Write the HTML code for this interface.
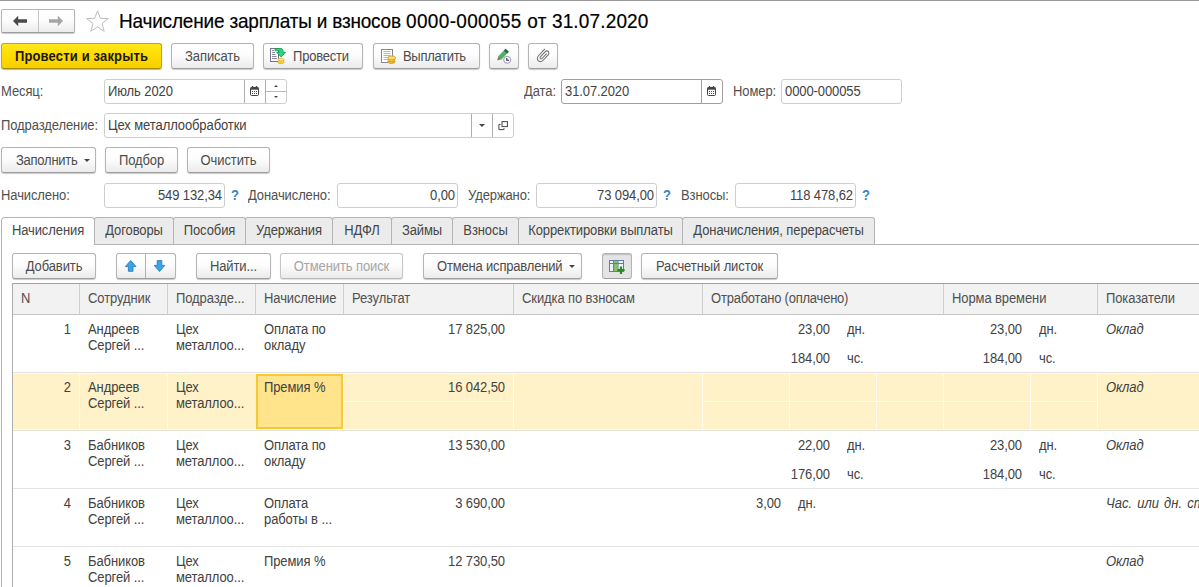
<!DOCTYPE html>
<html lang="ru"><head><meta charset="utf-8"><title>Начисление зарплаты и взносов</title>
<style>
*{box-sizing:border-box;margin:0;padding:0}
html,body{width:1199px;height:587px;overflow:hidden;background:#fff}
body{font-family:"Liberation Sans",sans-serif;font-size:13px;color:#464646;position:relative;line-height:15px}
.a{position:absolute;white-space:nowrap}
.btn{position:absolute;height:26px;border:1px solid #b4b4b4;border-bottom-color:#9e9e9e;border-radius:3px;background:linear-gradient(#ffffff 0%,#fdfdfd 45%,#ebebeb 100%);box-shadow:0 1px 1px rgba(0,0,0,.22);color:#4c4c4c;text-align:center;line-height:25px;white-space:nowrap}
.btn.y{background:linear-gradient(#ffe61e 0%,#ffdc00 50%,#f7ce00 100%);border-color:#c9a700;border-bottom-color:#a88c00;color:#1c1808;font-weight:bold;box-shadow:0 1px 1px rgba(90,70,0,.4)}
.btn.dis{color:#a6a6a6;border-color:#c6c6c6;border-bottom-color:#b8b8b8;box-shadow:0 1px 1px rgba(0,0,0,.12)}
.btn.on{background:#e4e4e4;box-shadow:inset 0 1px 1px rgba(0,0,0,.18)}
.inp{position:absolute;height:25px;border:1px solid #cecece;border-radius:3px;background:#fff;line-height:23px;color:#424242;white-space:nowrap}
.inp.f{border-color:#a0a0a0}
.lbl{position:absolute;color:#505050;line-height:25px;white-space:nowrap}
.q{position:absolute;color:#3b86c0;line-height:25px;font-weight:bold;font-size:13px}
.vd{position:absolute;top:0;bottom:0;width:1px;background:#adadad}
.tab{position:absolute;top:217px;height:27px;border:1px solid #b4b4b4;border-bottom:none;background:#ebebeb;color:#464646;line-height:26px;text-align:center;white-space:nowrap;border-radius:3px 3px 0 0}
.tab.act{background:#fff;height:28px;z-index:2;border-radius:4px 4px 0 0}
.th{position:absolute;top:284px;height:30px;line-height:30px;color:#505050;padding-left:8px;border-left:1px solid #cfcfcf;white-space:nowrap;overflow:hidden}
.row{position:absolute;left:13px;right:0;height:58px;border-bottom:1px solid #e3e3e3}
.c{position:absolute;line-height:16px;white-space:nowrap;color:#424242}
.ttl{font-size:19px;font-weight:normal;line-height:24px;color:#000;-webkit-text-stroke:0.18px #000;transform:scaleY(1.06);transform-origin:0 5px}
.t{display:inline-block;line-height:15px;letter-spacing:-0.1px;transform:scaleY(1.06);transform-origin:0 12px}
.r{text-align:right}
.i{font-style:italic}
</style></head>
<body>
<div class="a" style="left:0;top:0;width:1199px;height:1px;background:#999"></div>
<div class="btn" style="left:1px;top:9px;width:74px;height:24px;border-radius:2px">
<div class="vd" style="left:36px;background:#c6c6c6"></div>
<svg class="a" style="left:10px;top:5px" width="16" height="12" viewBox="0 0 16 12"><path d="M1 6 L6.2 0.8 L6.2 4.2 L15 4.2 L15 7.8 L6.2 7.8 L6.2 11.2 Z" fill="#4a4a4a"/></svg>
<svg class="a" style="left:46px;top:5px" width="16" height="12" viewBox="0 0 16 12"><path d="M15 6 L9.8 0.8 L9.8 4.2 L1 4.2 L1 7.8 L9.8 7.8 L9.8 11.2 Z" fill="#a5a5a5"/></svg>
</div>
<svg class="a" style="left:85px;top:9px" width="25" height="24" viewBox="0 0 25 24"><path d="M12.5 1.8 L15.3 9.3 L23.3 9.6 L17 14.6 L19.2 22.3 L12.5 17.9 L5.8 22.3 L8 14.6 L1.7 9.6 L9.7 9.3 Z" fill="#fff" stroke="#bdbdbd" stroke-width="1" stroke-linejoin="miter"/></svg>
<h1 class="a ttl" style="left:119px;top:9px"><span style="letter-spacing:-0.19px">Начисление зарплаты и взносов </span><span style="letter-spacing:0.34px">0000-000055 </span><span style="letter-spacing:0.15px">от 31.07.2020</span></h1>
<div class="btn y" style="left:1px;top:43px;width:161px;letter-spacing:0.17px"><span class="t" style="letter-spacing:0.16px">Провести и закрыть</span></div>
<div class="btn" style="left:171px;top:43px;width:83px"><span class="t">Записать</span></div>
<div class="btn" style="left:263px;top:43px;width:100px;text-align:left;padding-left:29px"><svg class="a" style="left:6px;top:4px" width="17" height="17" viewBox="0 0 17 17">
<rect x="0.5" y="0.5" width="8" height="13" fill="#fff" stroke="#74748a"/>
<path d="M2 2.5h2M2 4.5h3M2 6.5h3.5M2 8.5h4.5M2 10.5h5" stroke="#8a8a9c" stroke-width="1"/>
<rect x="7.9" y="11.6" width="6.2" height="3" fill="#f3d83a"/>
<ellipse cx="11" cy="14.4" rx="3.1" ry="1.3" fill="#f6e24a" stroke="#e0a63c" stroke-width=".7"/>
<ellipse cx="11" cy="13" rx="3.1" ry="1.3" fill="#f9e654" stroke="#e0a63c" stroke-width=".7"/>
<ellipse cx="11" cy="11.6" rx="3.1" ry="1.3" fill="#fbee7a" stroke="#e0a63c" stroke-width=".7"/>
<path d="M5 0.5 H11 Q13 0.5 13 2.5 V4.3 H15.5 L11.1 9.1 L6.7 4.3 H9.3 V3.5 Q9.3 2.8 8.6 2.8 H5 Z" fill="#2bd482" stroke="#10984f" stroke-width=".8" stroke-linejoin="round"/>
</svg><span class="t" style="letter-spacing:-0.2px">Провести</span></div>
<div class="btn" style="left:373px;top:43px;width:107px;text-align:left;padding-left:29px"><svg class="a" style="left:7px;top:5px" width="17" height="16" viewBox="0 0 17 16">
<rect x="0.5" y="0.5" width="11" height="13" fill="#fff" stroke="#85859a"/>
<path d="M2.5 2.5h7M2.5 4.5h7M2.5 6.5h7M2.5 8.5h4M2.5 10.5h4" stroke="#a9b6d8" stroke-width="1"/>
<ellipse cx="10.4" cy="12.6" rx="3.6" ry="1.9" fill="#f0c030" stroke="#c9962a" stroke-width=".8"/>
<ellipse cx="10.4" cy="10.8" rx="3.6" ry="1.9" fill="#f5cc40" stroke="#c9962a" stroke-width=".8"/>
<ellipse cx="10.6" cy="8.9" rx="4" ry="2" fill="#fbdc60" stroke="#c9962a" stroke-width=".8"/>
</svg><span class="t" style="letter-spacing:-0.3px">Выплатить</span></div>
<div class="btn" style="left:489px;top:43px;width:30px"><svg class="a" style="left:6px;top:4px" width="18" height="17" viewBox="0 0 18 17">
<path d="M9.6 0.9 L12.6 3.7 L5.4 11.3 L2.4 8.5 Z" fill="#4fb263" stroke="#3f9a50" stroke-width=".5"/>
<path d="M9.6 0.9 L12.6 3.7 L11 5.4 L8 2.6 Z" fill="#355a4a"/>
<path d="M2.4 8.5 L5.4 11.3 L1.2 12.6 Z" fill="#8a7264"/>
<circle cx="11.2" cy="11.8" r="3.5" fill="#fff" stroke="#8a86b4" stroke-width=".9"/>
<path d="M10.8 9.9 V12.2 H13" fill="none" stroke="#223" stroke-width="1.1"/>
</svg></div>
<div class="btn" style="left:528px;top:43px;width:30px"><svg class="a" style="left:7px;top:4px" width="15" height="16" viewBox="0 0 15 16">
<path d="M8.7 1.2 L2.3 8 C0.9 9.6 1.1 11.8 2.4 12.9 C3.7 14 5.6 13.9 6.9 12.5 L12.2 6.8 C13.2 5.7 13.1 4.3 12.2 3.5 C11.3 2.7 10 2.8 9.1 3.8 L4.4 8.9 C3.9 9.5 3.9 10.2 4.4 10.7 C4.9 11.1 5.6 11.1 6.1 10.5 L10.4 5.8" fill="none" stroke="#707070" stroke-width="1.05" stroke-linecap="round"/>
</svg></div>
<div class="lbl" style="left:1px;top:79px"><span class="t">Месяц:</span></div>
<div class="inp" style="left:104px;top:79px;width:183px;padding-left:3px"><span class="t">Июль 2020</span><div class="vd" style="left:139px"></div><svg class="a" style="left:145px;top:6px" width="9" height="10" viewBox="0 0 9 10"><rect x="0.5" y="1.5" width="8" height="8" rx="1" fill="#fff" stroke="#444" stroke-width="1"/><rect x="0.5" y="1.5" width="8" height="2.2" fill="#444"/><rect x="1.8" y="0" width="1.4" height="2" fill="#444"/><rect x="5.8" y="0" width="1.4" height="2" fill="#444"/><g fill="#444"><rect x="2" y="5" width="1" height="1"/><rect x="4" y="5" width="1" height="1"/><rect x="6" y="5" width="1" height="1"/><rect x="2" y="7" width="1" height="1"/><rect x="4" y="7" width="1" height="1"/><rect x="6" y="7" width="1" height="1"/></g></svg><div class="vd" style="left:160px"></div><div class="a" style="left:161px;top:11px;width:21px;height:1px;background:#b9b9b9"></div><svg class="a" style="left:169px;top:5px" width="4" height="2" viewBox="0 0 4 2"><path d="M0 2 L2 0 L4 2Z" fill="#444"/></svg><svg class="a" style="left:169px;top:16px" width="4" height="2" viewBox="0 0 4 2"><path d="M0 0 L2 2 L4 0Z" fill="#444"/></svg></div>
<div class="lbl" style="left:524px;top:79px"><span class="t">Дата:</span></div>
<div class="inp f" style="left:561px;top:79px;width:162px;padding-left:3px"><span class="t">31.07.2020</span><div class="vd" style="left:139px;background:#a0a0a0"></div><svg class="a" style="left:145px;top:6px" width="9" height="10" viewBox="0 0 9 10"><rect x="0.5" y="1.5" width="8" height="8" rx="1" fill="#fff" stroke="#444" stroke-width="1"/><rect x="0.5" y="1.5" width="8" height="2.2" fill="#444"/><rect x="1.8" y="0" width="1.4" height="2" fill="#444"/><rect x="5.8" y="0" width="1.4" height="2" fill="#444"/><g fill="#444"><rect x="2" y="5" width="1" height="1"/><rect x="4" y="5" width="1" height="1"/><rect x="6" y="5" width="1" height="1"/><rect x="2" y="7" width="1" height="1"/><rect x="4" y="7" width="1" height="1"/><rect x="6" y="7" width="1" height="1"/></g></svg></div>
<div class="lbl" style="left:733px;top:79px"><span class="t">Номер:</span></div>
<div class="inp" style="left:781px;top:79px;width:121px;padding-left:3px"><span class="t">0000-000055</span></div>
<div class="lbl" style="left:1px;top:113px"><span class="t">Подразделение:</span></div>
<div class="inp" style="left:104px;top:113px;width:410px;padding-left:3px"><span class="t">Цех металлообработки</span><div class="vd" style="left:366px"></div><svg class="a" style="left:373.5px;top:10px" width="6" height="3" viewBox="0 0 6 3"><path d="M0 0 L3 3 L6 0Z" fill="#444"/></svg><div class="vd" style="left:387px"></div><svg class="a" style="left:393px;top:7px" width="11" height="10" viewBox="0 0 11 10"><rect x="4" y="0.6" width="5.4" height="5" fill="#fff" stroke="#444" stroke-width="1"/><path d="M2.6 3.4 H0.9 V8.6 H6 V7.2" fill="none" stroke="#444" stroke-width="1"/></svg></div>
<div class="btn" style="left:1px;top:147px;width:95px;text-align:left;padding-left:14px"><span class="t" style="letter-spacing:-0.25px">Заполнить</span><svg class="a" style="left:81.5px;top:11px" width="6" height="3" viewBox="0 0 6 3"><path d="M0 0 L3 3 L6 0Z" fill="#444"/></svg></div>
<div class="btn" style="left:105px;top:147px;width:73px"><span class="t">Подбор</span></div>
<div class="btn" style="left:187px;top:147px;width:83px"><span class="t">Очистить</span></div>
<div class="lbl" style="left:1px;top:183px"><span class="t">Начислено:</span></div>
<div class="inp r" style="left:104px;top:183px;width:121px;padding-right:2px"><span class="t">549 132,34</span></div>
<div class="q" style="left:231px;top:183px"><span class="t">?</span></div>
<div class="lbl" style="left:248px;top:183px"><span class="t">Доначислено:</span></div>
<div class="inp r" style="left:337px;top:183px;width:121px;padding-right:2px"><span class="t">0,00</span></div>
<div class="lbl" style="left:468px;top:183px"><span class="t">Удержано:</span></div>
<div class="inp r" style="left:536px;top:183px;width:121px;padding-right:2px"><span class="t">73 094,00</span></div>
<div class="q" style="left:663px;top:183px"><span class="t">?</span></div>
<div class="lbl" style="left:681px;top:183px"><span class="t">Взносы:</span></div>
<div class="inp r" style="left:735px;top:183px;width:121px;padding-right:2px"><span class="t">118 478,62</span></div>
<div class="q" style="left:862px;top:183px"><span class="t">?</span></div>
<div class="a" style="left:1px;top:244px;width:1198px;height:1px;background:#b4b4b4"></div>
<div class="a" style="left:1px;top:244px;width:1px;height:343px;background:#b4b4b4"></div>
<div class="tab act" style="left:1px;width:94px"><span class="t">Начисления</span></div>
<div class="tab" style="left:94px;width:80px"><span class="t">Договоры</span></div>
<div class="tab" style="left:173px;width:73px"><span class="t">Пособия</span></div>
<div class="tab" style="left:245px;width:88px"><span class="t">Удержания</span></div>
<div class="tab" style="left:332px;width:60px"><span class="t">НДФЛ</span></div>
<div class="tab" style="left:391px;width:62px"><span class="t">Займы</span></div>
<div class="tab" style="left:452px;width:67px"><span class="t">Взносы</span></div>
<div class="tab" style="left:518px;width:165px"><span class="t">Корректировки выплаты</span></div>
<div class="tab" style="left:682px;width:193px"><span class="t">Доначисления, перерасчеты</span></div>
<div class="btn" style="left:12px;top:253px;width:84px"><span class="t">Добавить</span></div>
<div class="btn" style="left:116px;top:253px;width:60px"><div class="vd" style="left:28px;background:#b2b2b2"></div><svg class="a" style="left:8px;top:6px" width="12" height="12" viewBox="0 0 12 12"><path d="M5.7 0.5 L11 6.6 L8 6.6 L8 11.3 L3.4 11.3 L3.4 6.6 L0.4 6.6 Z" fill="#3ba4e6" stroke="#2b7fc0" stroke-width="0.9"/></svg><svg class="a" style="left:37px;top:6px" width="12" height="12" viewBox="0 0 12 12"><path d="M5.5 11.5 L10.8 5.4 L7.8 5.4 L7.8 0.6 L3.2 0.6 L3.2 5.4 L0.2 5.4 Z" fill="#3ba4e6" stroke="#2b7fc0" stroke-width="0.9"/></svg></div>
<div class="btn" style="left:196px;top:253px;width:75px"><span class="t">Найти...</span></div>
<div class="btn dis" style="left:280px;top:253px;width:123px"><span class="t">Отменить поиск</span></div>
<div class="btn" style="left:423px;top:253px;width:159px;text-align:left;padding-left:13px"><span class="t" style="letter-spacing:-0.18px">Отмена исправлений</span><svg class="a" style="left:145px;top:11px" width="6" height="3" viewBox="0 0 6 3"><path d="M0 0 L3 3 L6 0Z" fill="#444"/></svg></div>
<div class="btn on" style="left:602px;top:253px;width:30px"><svg class="a" style="left:6px;top:6px" width="17" height="15" viewBox="0 0 17 15">
<rect x="0.5" y="0.5" width="14" height="11" fill="#eaf3fb" stroke="#5f7fa8"/>
<rect x="5" y="1" width="3.6" height="10" fill="#8cbf6a"/>
<path d="M0.5 3.5 H14.5 M4.5 0.5 V11.5 M9 0.5 V11.5" stroke="#5f7fa8" stroke-width="1" fill="none"/>
<path d="M12 6.5 V14 M8.4 10.2 H15.6" stroke="#2f8a1f" stroke-width="2.2" fill="none"/>
</svg></div>
<div class="btn" style="left:641px;top:253px;width:137px"><span class="t">Расчетный листок</span></div>
<div class="a" style="left:12px;top:283px;width:1187px;height:32px;background:#f2f2f2;border-top:1px solid #a0a0a0;border-bottom:1px solid #c4c4c4"></div>
<div class="a" style="left:12px;top:283px;width:1px;height:304px;background:#adadad"></div>
<div class="th" style="left:13px;width:66px;border-left:none;"><span class="t">N</span></div>
<div class="th" style="left:79px;width:88px;"><span class="t">Сотрудник</span></div>
<div class="th" style="left:167px;width:88px;"><span class="t">Подразде...</span></div>
<div class="th" style="left:255px;width:88px;"><span class="t">Начисление</span></div>
<div class="th" style="left:343px;width:170px;"><span class="t">Результат</span></div>
<div class="th" style="left:513px;width:189px;"><span class="t">Скидка по взносам</span></div>
<div class="th" style="left:702px;width:241px;"><span class="t" style="letter-spacing:-0.22px">Отработано (оплачено)</span></div>
<div class="th" style="left:943px;width:154px;"><span class="t">Норма времени</span></div>
<div class="th" style="left:1097px;width:102px;"><span class="t">Показатели</span></div>
<div class="row" style="top:315px;">
<div class="c r" style="left:0;width:58px;top:7px"><span class="t">1</span></div>
<div class="c" style="left:75px;top:7px"><span class="t">Андреев</span><br><span class="t">Сергей ...</span></div>
<div class="c" style="left:163px;top:7px"><span class="t">Цех</span><br><span class="t">металлоо...</span></div>
<div class="c" style="left:251px;top:7px"><span class="t">Оплата по</span><br><span class="t">окладу</span></div>
<div class="c r" style="left:331px;width:161px;top:7px"><span class="t">17 825,00</span></div>
<div class="c r" style="left:737px;width:80px;top:7px"><span class="t">23,00</span></div>
<div class="c" style="left:834px;top:7px"><span class="t">дн.</span></div>
<div class="c r" style="left:737px;width:80px;top:36px"><span class="t">184,00</span></div>
<div class="c" style="left:834px;top:36px"><span class="t">чс.</span></div>
<div class="c r" style="left:929px;width:80px;top:7px"><span class="t">23,00</span></div>
<div class="c" style="left:1026px;top:7px"><span class="t">дн.</span></div>
<div class="c r" style="left:929px;width:80px;top:36px"><span class="t">184,00</span></div>
<div class="c" style="left:1026px;top:36px"><span class="t">чс.</span></div>
<div class="c i" style="left:1093px;top:7px"><span class="t">Оклад</span></div>
</div>
<div class="row" style="top:373px;background:#fff2c8;border-bottom-color:#e6e3d6;">
<div class="a" style="left:66px;top:0;width:1px;height:57px;background:#fffaec"></div>
<div class="a" style="left:154px;top:0;width:1px;height:57px;background:#fffaec"></div>
<div class="a" style="left:330px;top:0;width:1px;height:57px;background:#fffaec"></div>
<div class="a" style="left:500px;top:0;width:1px;height:57px;background:#fffaec"></div>
<div class="a" style="left:689px;top:0;width:1px;height:57px;background:#fffaec"></div>
<div class="a" style="left:776px;top:0;width:1px;height:57px;background:#fffaec"></div>
<div class="a" style="left:863px;top:0;width:1px;height:57px;background:#fffaec"></div>
<div class="a" style="left:930px;top:0;width:1px;height:57px;background:#fffaec"></div>
<div class="a" style="left:1017px;top:0;width:1px;height:57px;background:#fffaec"></div>
<div class="a" style="left:1084px;top:0;width:1px;height:57px;background:#fffaec"></div>
<div class="a" style="left:331px;top:28px;width:169px;height:1px;background:#fffaec"></div>
<div class="a" style="left:690px;top:28px;width:394px;height:1px;background:#fffaec"></div>
<div class="a" style="left:0;top:0;width:1186px;height:1px;background:#fffaec"></div>
<div class="a" style="left:0;top:56px;width:1186px;height:1px;background:#fffaec"></div>
<div class="a" style="left:243px;top:1px;width:87px;height:55px;background:#ffe48c;border:2px solid #f6c838"></div>
<div class="c r" style="left:0;width:58px;top:7px"><span class="t">2</span></div>
<div class="c" style="left:75px;top:7px"><span class="t">Андреев</span><br><span class="t">Сергей ...</span></div>
<div class="c" style="left:163px;top:7px"><span class="t">Цех</span><br><span class="t">металлоо...</span></div>
<div class="c" style="left:251px;top:7px"><span class="t">Премия %</span><br></div>
<div class="c r" style="left:331px;width:161px;top:7px"><span class="t">16 042,50</span></div>
<div class="c i" style="left:1093px;top:7px"><span class="t">Оклад</span></div>
</div>
<div class="row" style="top:431px;">
<div class="c r" style="left:0;width:58px;top:7px"><span class="t">3</span></div>
<div class="c" style="left:75px;top:7px"><span class="t">Бабников</span><br><span class="t">Сергей ...</span></div>
<div class="c" style="left:163px;top:7px"><span class="t">Цех</span><br><span class="t">металлоо...</span></div>
<div class="c" style="left:251px;top:7px"><span class="t">Оплата по</span><br><span class="t">окладу</span></div>
<div class="c r" style="left:331px;width:161px;top:7px"><span class="t">13 530,00</span></div>
<div class="c r" style="left:737px;width:80px;top:7px"><span class="t">22,00</span></div>
<div class="c" style="left:834px;top:7px"><span class="t">дн.</span></div>
<div class="c r" style="left:737px;width:80px;top:36px"><span class="t">176,00</span></div>
<div class="c" style="left:834px;top:36px"><span class="t">чс.</span></div>
<div class="c r" style="left:929px;width:80px;top:7px"><span class="t">23,00</span></div>
<div class="c" style="left:1026px;top:7px"><span class="t">дн.</span></div>
<div class="c r" style="left:929px;width:80px;top:36px"><span class="t">184,00</span></div>
<div class="c" style="left:1026px;top:36px"><span class="t">чс.</span></div>
<div class="c i" style="left:1093px;top:7px"><span class="t">Оклад</span></div>
</div>
<div class="row" style="top:489px;">
<div class="c r" style="left:0;width:58px;top:7px"><span class="t">4</span></div>
<div class="c" style="left:75px;top:7px"><span class="t">Бабников</span><br><span class="t">Сергей ...</span></div>
<div class="c" style="left:163px;top:7px"><span class="t">Цех</span><br><span class="t">металлоо...</span></div>
<div class="c" style="left:251px;top:7px"><span class="t">Оплата</span><br><span class="t">работы в ...</span></div>
<div class="c r" style="left:331px;width:161px;top:7px"><span class="t">3 690,00</span></div>
<div class="c r" style="left:688px;width:80px;top:7px"><span class="t">3,00</span></div>
<div class="c" style="left:785px;top:7px"><span class="t">дн.</span></div>
<div class="c i" style="left:1093px;top:7px"><span class="t" style="letter-spacing:0;word-spacing:1.5px">Час. или дн. ст</span></div>
</div>
<div class="row" style="top:547px;">
<div class="c r" style="left:0;width:58px;top:7px"><span class="t">5</span></div>
<div class="c" style="left:75px;top:7px"><span class="t">Бабников</span><br><span class="t">Сергей ...</span></div>
<div class="c" style="left:163px;top:7px"><span class="t">Цех</span><br><span class="t">металлоо...</span></div>
<div class="c" style="left:251px;top:7px"><span class="t">Премия %</span><br></div>
<div class="c r" style="left:331px;width:161px;top:7px"><span class="t">12 730,50</span></div>
<div class="c i" style="left:1093px;top:7px"><span class="t">Оклад</span></div>
</div>
</body></html>
